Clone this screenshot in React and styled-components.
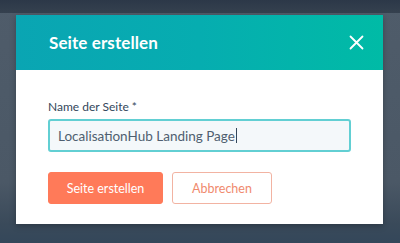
import styled, { createGlobalStyle } from "styled-components";

const GlobalStyle = createGlobalStyle`
  html, body {
    margin: 0;
    padding: 0;
    width: 400px;
    height: 243px;
    overflow: hidden;
    background: #4d5a68;
    font-family: Lato, "Open Sans", sans-serif;
  }
`;

const Page = styled.div`
  width: 400px;
  height: 243px;
  display: flex;
  flex-direction: column;
  background: linear-gradient(180deg, #4f5c6a 0%, #4b5866 75%, #3a4a5a 92%, #34475a 100%);
`;

const TopBar = styled.div`
  height: 13px;
  background: linear-gradient(180deg, #2c3848 0%, #35414f 100%);
`;

const Stage = styled.div`
  flex: 1;
  padding: 2px 0 0 16px;
`;

const Dialog = styled.div`
  width: 367px;
  background: #fff;
  box-shadow: 0 2px 6px rgba(0, 0, 0, 0.25);
`;

const Header = styled.div`
  height: 55px;
  display: flex;
  align-items: center;
  justify-content: space-between;
  padding: 0 19px 0 33px;
  background: linear-gradient(90deg, #0aa5b3 0%, #06adb0 50%, #00bba6 100%);
`;

const Title = styled.h1`
  margin: 0;
  color: #fff;
  font-size: 17px;
  font-weight: 700;
  letter-spacing: 0.1px;
`;

const Close = styled.button`
  border: 0;
  background: none;
  padding: 0;
  width: 15px;
  height: 15px;
  display: flex;
  cursor: pointer;
`;

const Body = styled.div`
  padding: 29px 32px 20px 32px;
  display: flex;
  flex-direction: column;
`;

const Label = styled.label`
  font-size: 12px;
  line-height: 15px;
  color: #33475b;
  margin-bottom: 5px;
`;

const Field = styled.div`
  box-sizing: border-box;
  width: 303px;
  height: 33px;
  border: 2px solid #62cfd3;
  border-radius: 3px;
  background: #f4f8fa;
  display: flex;
  align-items: center;
  padding: 0 8px;
  font-size: 13.5px;
  color: #4f5f70;
`;

const Caret = styled.span`
  display: inline-block;
  width: 1px;
  height: 15px;
  background: #33475b;
  margin-left: 1px;
`;

const Actions = styled.div`
  display: flex;
  gap: 9px;
  margin-top: 20px;
`;

const Button = styled.button`
  box-sizing: border-box;
  height: 32px;
  width: ${(p) => p.$w}px;
  border-radius: 3px;
  font-family: inherit;
  font-size: 12.5px;
  cursor: pointer;
  border: 1px solid ${(p) => (p.$primary ? "#ff7a59" : "#f2b3a2")};
  background: ${(p) => (p.$primary ? "#ff7a59" : "#fff")};
  color: ${(p) => (p.$primary ? "#fff" : "#f08a6e")};
`;

export default function App() {
  return (
    <Page>
      <GlobalStyle />
      <TopBar />
      <Stage>
        <Dialog>
          <Header>
            <Title>Seite erstellen</Title>
            <Close aria-label="Schließen">
              <svg width="15" height="15" viewBox="0 0 15 15">
                <path d="M1.5 1.5 L13.5 13.5 M13.5 1.5 L1.5 13.5" stroke="#fff" strokeWidth="1.8" strokeLinecap="round" />
              </svg>
            </Close>
          </Header>
          <Body>
            <Label>Name der Seite *</Label>
            <Field>
              LocalisationHub Landing Page
              <Caret />
            </Field>
            <Actions>
              <Button $primary $w={115}>Seite erstellen</Button>
              <Button $w={100}>Abbrechen</Button>
            </Actions>
          </Body>
        </Dialog>
      </Stage>
    </Page>
  );
}
